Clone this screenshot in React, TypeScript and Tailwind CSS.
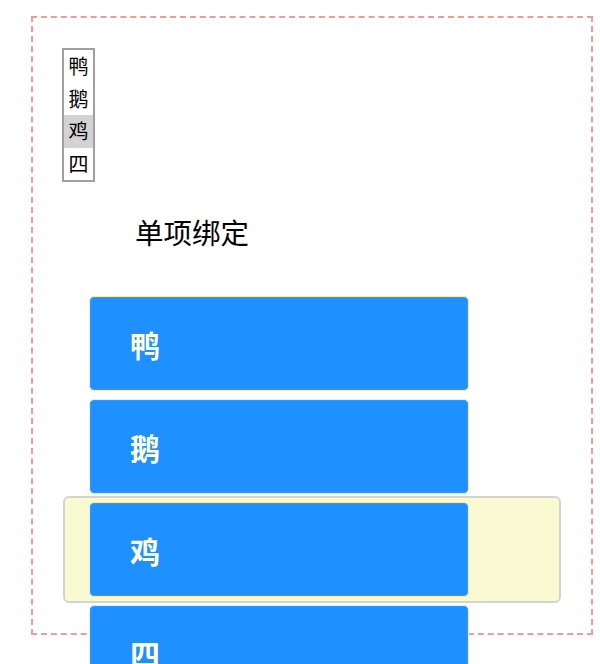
const ANIMALS = ["鸭", "鹅", "鸡", "四"];
const SELECTED = 2;

const FONT = { fontFamily: '"Noto Sans CJK SC", "Noto Sans", sans-serif' };

export default function App() {
  return (
    <div className="bg-white w-[600px] h-[664px] overflow-hidden pt-[16px] pl-[31px]" style={FONT}>
      <div className="w-[562px] h-[619px] border-2 border-dashed border-[#f29a9a] pt-[30px] pl-[29px]">
        {/* listbox */}
        <div className="w-[33px] h-[134px] border-2 border-[#a0a0a0] bg-white">
          {ANIMALS.map((a, i) => (
            <div
              key={a}
              className={`h-[32.5px] flex items-center justify-center text-[20px] leading-none text-black ${
                i === SELECTED ? "bg-[#d3d3d3]" : ""
              }`}
            >
              {a}
            </div>
          ))}
        </div>

        <div className="mt-[36px] ml-[73px] text-[28.5px] leading-[28px] text-black">单项绑定</div>

        {/* 列表 */}
        <div className="relative mt-[50px] ml-[27px]">
          <div className="absolute left-[-26px] top-[200px] w-[498px] h-[107px] rounded-[6px] border-2 border-[#d3d3d3] bg-[#fafad2]" />
          <div className="relative flex flex-col gap-[8px]">
            {ANIMALS.map((a) => (
              <div
                key={a}
                className="w-[380px] h-[95px] shrink-0 rounded-[5px] border border-[#f3efb0] bg-[#1e90ff] shadow-[inset_0_0_2px_#6aa9ff] flex items-center pl-[40px]"
              >
                <span className="text-[30px] font-bold leading-none text-[#ffffe0]">{a}</span>
              </div>
            ))}
          </div>
        </div>
      </div>
    </div>
  );
}
